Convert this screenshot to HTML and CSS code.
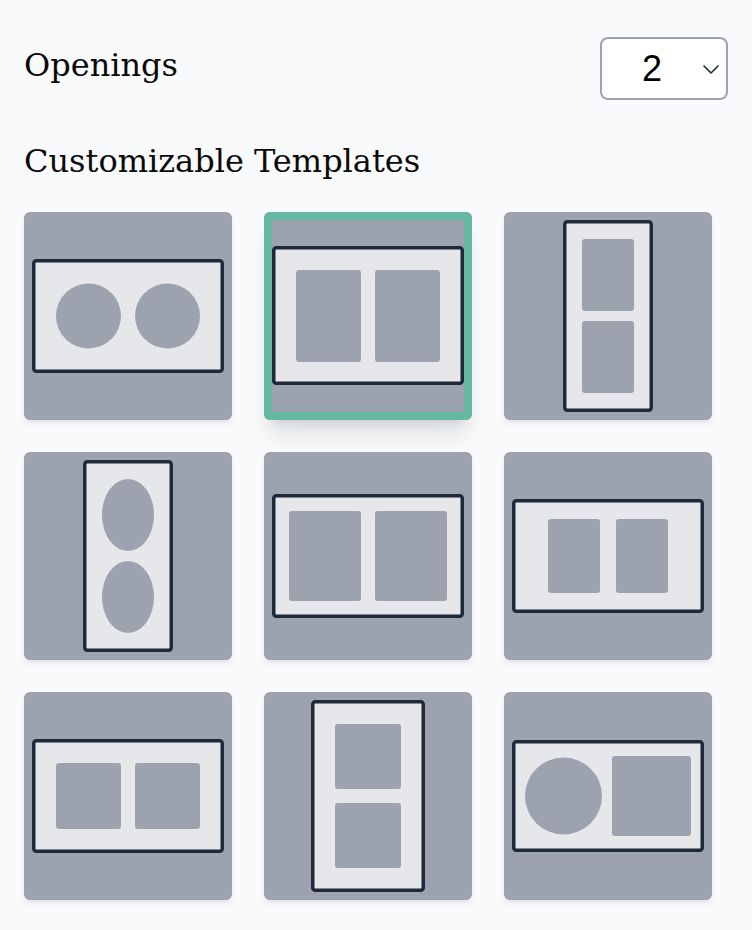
FILE: index.html
```html
<!DOCTYPE html>
<html lang="en">
<head>
<meta charset="utf-8">
<title>Templates</title>
<link rel="stylesheet" href="styles.css">
</head>
<body>
<main class="panel">
  <div class="header-row">
    <h1 class="title">Openings</h1>
    <div class="select-wrap">
      <select class="select" aria-label="Openings">
        <option>1</option>
        <option selected>2</option>
        <option>3</option>
        <option>4</option>
      </select>
      <svg class="chevron" width="16" height="9" viewBox="0 0 16 9" aria-hidden="true"><path d="M1 1 L8 8 L15 1" fill="none" stroke="#1f2937" stroke-width="1.6" stroke-linecap="round" stroke-linejoin="round"/></svg>
    </div>
  </div>

  <h2 class="subtitle">Customizable Templates</h2>

  <div class="grid">
    <div class="card">
      <svg width="208" height="208" viewBox="0 0 208 208">
        <rect class="frame" x="9.75" y="48.75" width="188.5" height="110.5" rx="2.5"/>
        <circle class="hole" cx="64.5" cy="104" r="32.5"/>
        <circle class="hole" cx="143.5" cy="104" r="32.5"/>
      </svg>
    </div>
    <div class="card is-selected">
      <svg width="208" height="208" viewBox="0 0 208 208">
        <rect class="frame" x="9.75" y="35.75" width="188.5" height="135.5" rx="2.5"/>
        <rect class="hole" x="32" y="58" width="65" height="92" rx="3"/>
        <rect class="hole" x="111" y="58" width="65" height="92" rx="3"/>
      </svg>
    </div>
    <div class="card">
      <svg width="208" height="208" viewBox="0 0 208 208">
        <rect class="frame" x="60.75" y="9.75" width="86.5" height="188.5" rx="2.5"/>
        <rect class="hole" x="78" y="27" width="52" height="72" rx="3"/>
        <rect class="hole" x="78" y="109" width="52" height="72" rx="3"/>
      </svg>
    </div>

    <div class="card">
      <svg width="208" height="208" viewBox="0 0 208 208">
        <rect class="frame" x="60.75" y="9.75" width="86.5" height="188.5" rx="2.5"/>
        <ellipse class="hole" cx="104" cy="63" rx="26" ry="36"/>
        <ellipse class="hole" cx="104" cy="145" rx="26" ry="36"/>
      </svg>
    </div>
    <div class="card">
      <svg width="208" height="208" viewBox="0 0 208 208">
        <rect class="frame" x="9.75" y="43.75" width="188.5" height="120.5" rx="2.5"/>
        <rect class="hole" x="25" y="59" width="72" height="90" rx="3"/>
        <rect class="hole" x="111" y="59" width="72" height="90" rx="3"/>
      </svg>
    </div>
    <div class="card">
      <svg width="208" height="208" viewBox="0 0 208 208">
        <rect class="frame" x="9.75" y="48.75" width="188.5" height="110.5" rx="2.5"/>
        <rect class="hole" x="44" y="67" width="52" height="74" rx="3"/>
        <rect class="hole" x="112" y="67" width="52" height="74" rx="3"/>
      </svg>
    </div>

    <div class="card">
      <svg width="208" height="208" viewBox="0 0 208 208">
        <rect class="frame" x="9.75" y="48.75" width="188.5" height="110.5" rx="2.5"/>
        <rect class="hole" x="32" y="71" width="65" height="66" rx="3"/>
        <rect class="hole" x="111" y="71" width="65" height="66" rx="3"/>
      </svg>
    </div>
    <div class="card">
      <svg width="208" height="208" viewBox="0 0 208 208">
        <rect class="frame" x="48.75" y="9.75" width="110.5" height="188.5" rx="2.5"/>
        <rect class="hole" x="71" y="32" width="66" height="65" rx="3"/>
        <rect class="hole" x="71" y="111" width="66" height="65" rx="3"/>
      </svg>
    </div>
    <div class="card">
      <svg width="208" height="208" viewBox="0 0 208 208">
        <rect class="frame" x="9.75" y="49.75" width="188.5" height="108.5" rx="2.5"/>
        <circle class="hole" cx="59.5" cy="104" r="38.5"/>
        <rect class="hole" x="108" y="64" width="79" height="80" rx="3"/>
      </svg>
    </div>
  </div>
</main>
</body>
</html>
```

FILE: styles.css
```css
html, body {
  margin: 0;
  padding: 0;
  background: #f9fafb;
}

body {
  font-family: "DejaVu Serif", serif;
  color: #111111;
}

.panel {
  padding: 37px 24px 24px;
}

.header-row {
  display: flex;
  justify-content: space-between;
  align-items: flex-start;
}

.title {
  margin: 8px 0 0;
  font-family: "DejaVu Serif", serif;
  font-weight: normal;
  font-size: 32px;
  line-height: 40px;
  color: #0a0a0a;
}

.select-wrap {
  position: relative;
  width: 128px;
  height: 63px;
}

.select {
  -webkit-appearance: none;
  appearance: none;
  box-sizing: border-box;
  width: 128px;
  height: 63px;
  margin: 0;
  padding: 0 0 0 40px;
  border: 2px solid #9ca3af;
  border-radius: 8px;
  background: #ffffff;
  font-family: "Liberation Sans", Arial, sans-serif;
  font-size: 36px;
  color: #000000;
  outline: none;
}

.chevron {
  position: absolute;
  top: 28px;
  right: 9px;
  pointer-events: none;
}

.subtitle {
  margin: 41px 0 0;
  font-family: "DejaVu Serif", serif;
  font-weight: normal;
  font-size: 32px;
  line-height: 40px;
  color: #0a0a0a;
}

.grid {
  margin-top: 31px;
  display: grid;
  grid-template-columns: repeat(3, 208px);
  grid-auto-rows: 208px;
  gap: 32px;
}

.card {
  position: relative;
  width: 208px;
  height: 208px;
  border-radius: 6px;
  background: #9ca3af;
  overflow: hidden;
  box-shadow: 0 4px 6px -1px rgba(0, 0, 0, 0.08), 0 2px 4px -2px rgba(0, 0, 0, 0.08);
}

.card svg {
  display: block;
}

.card.is-selected {
  overflow: visible;
  box-shadow: 0 20px 25px -5px rgba(0, 0, 0, 0.1), 0 8px 10px -6px rgba(0, 0, 0, 0.1);
}

.card.is-selected::after {
  content: "";
  position: absolute;
  inset: 0;
  border: 8px solid #66b8a2;
  border-radius: 6px;
  pointer-events: none;
}

.frame {
  fill: #e5e7eb;
  stroke: #1f2937;
  stroke-width: 3.5;
}

.hole {
  fill: #9ca3af;
}
```
